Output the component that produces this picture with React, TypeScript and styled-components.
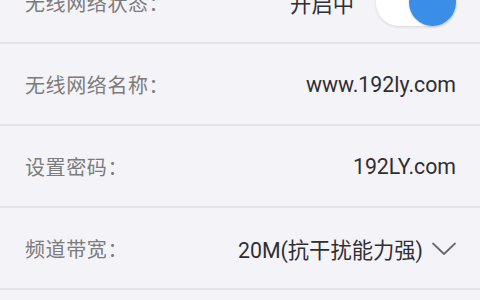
import React from "react";
import styled, { createGlobalStyle } from "styled-components";

const Global = createGlobalStyle`
  html, body { margin: 0; padding: 0; background: #f4f3f8; overflow: hidden; }
  body { font-family: Roboto, "Noto Sans CJK SC", sans-serif; }
`;

const List = styled.div`
  width: 480px;
  margin-top: -38px;
  display: flex;
  flex-direction: column;
`;

const Row = styled.div`
  height: 79px;
  display: flex;
  align-items: center;
  justify-content: space-between;
  padding: 1px 24px 0 25px;
  border-bottom: 2px solid #e4e3e8;
`;

const Label = styled.span`
  font-size: 20px;
  color: #7b7b7d;
  letter-spacing: 0.6px;
`;

const Right = styled.div<{ $gap?: number }>`
  display: flex;
  align-items: center;
  gap: ${(p) => p.$gap ?? 0}px;
`;

const Value = styled.span`
  font-size: 21.3px;
  color: #2f2f31;
`;

const Track = styled.div`
  width: 80px;
  height: 46px;
  border-radius: 23px;
  background: #ffffff;
  box-shadow: 0 1px 3px rgba(0, 0, 0, 0.12);
  display: flex;
  justify-content: flex-end;
  align-items: center;
`;

const Knob = styled.div`
  width: 47px;
  height: 47px;
  border-radius: 50%;
  background: #3a8ee6;
  box-shadow: 0 1px 2px rgba(0, 0, 0, 0.15);
`;

const Chevron = () => (
  <svg width="24" height="14" viewBox="0 0 24 14">
    <path d="M1 1.5 L12 12 L23 1.5" fill="none" stroke="#6a6a6c" strokeWidth="1.8" strokeLinejoin="round" strokeLinecap="round" />
  </svg>
);

export default function App() {
  return (
    <>
      <Global />
      <List>
        <Row>
          <Label>无线网络状态：</Label>
          <Right $gap={22}>
            <Value>开启中</Value>
            <Track>
              <Knob />
            </Track>
          </Right>
        </Row>
        <Row>
          <Label>无线网络名称：</Label>
          <Value>www.192ly.com</Value>
        </Row>
        <Row>
          <Label>设置密码：</Label>
          <Value>192LY.com</Value>
        </Row>
        <Row>
          <Label>频道带宽：</Label>
          <Right $gap={9}>
            <Value>20M(抗干扰能力强)</Value>
            <Chevron />
          </Right>
        </Row>
        <Row />
      </List>
    </>
  );
}
